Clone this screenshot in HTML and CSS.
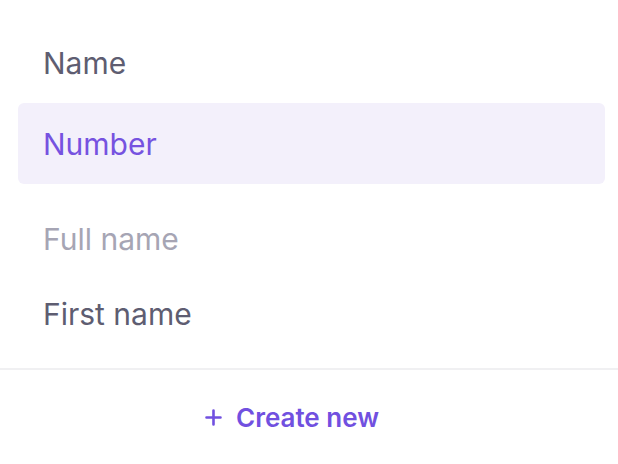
FILE: index.html
```html
<!DOCTYPE html>
<html lang="en">
<head>
  <meta charset="UTF-8">
  <meta name="viewport" content="width=device-width, initial-scale=1.0">
  <title>Fields</title>
  <link rel="stylesheet" href="styles.css">
</head>
<body>
  <div class="menu">
    <ul class="options">
      <li class="option">Name</li>
      <li class="option active">Number</li>
    </ul>
    <div class="group">
      <div class="group-title">Full name</div>
      <ul class="options">
        <li class="option small">First name</li>
      </ul>
    </div>
    <div class="footer">
      <button class="create">
        <svg width="17" height="17" viewBox="0 0 17 17" fill="none" stroke="currentColor" stroke-width="2.6" stroke-linecap="round">
          <path d="M8.5 1.5v14M1.5 8.5h14"/>
        </svg>
        Create new
      </button>
    </div>
  </div>
</body>
</html>
```

FILE: styles.css
```css
body {
  margin: 0;
  background: #fff;
  font-family: Inter, 'Noto Sans', sans-serif;
}
.menu {
  width: 618px;
  padding-top: 22px;
}
.options {
  list-style: none;
  margin: 0;
  padding: 0 13px 0 18px;
}
.option {
  height: 81px;
  display: flex;
  align-items: center;
  padding-left: 25px;
  padding-top: 1px;
  box-sizing: border-box;
  border-radius: 6px;
  font-size: 30px;
  color: #5e5d71;
}
.option.active {
  background: #f3f0fb;
  color: #7652e0;
}
.option.small {
  height: 74px;
}
.group {
  margin-top: 18px;
}
.group-title {
  height: 74px;
  display: flex;
  align-items: center;
  padding-left: 43px;
  font-size: 30px;
  color: #a6a5b4;
}
.footer {
  margin-top: 18px;
  border-top: 2px solid #f0f0f2;
  height: 94px;
  display: flex;
  align-items: center;
  justify-content: center;
  padding-right: 34px;
}
.create {
  display: flex;
  align-items: center;
  gap: 14px;
  border: none;
  background: none;
  padding: 0;
  font-family: inherit;
  font-size: 26px;
  font-weight: 600;
  color: #7150e0;
  cursor: pointer;
}
```
